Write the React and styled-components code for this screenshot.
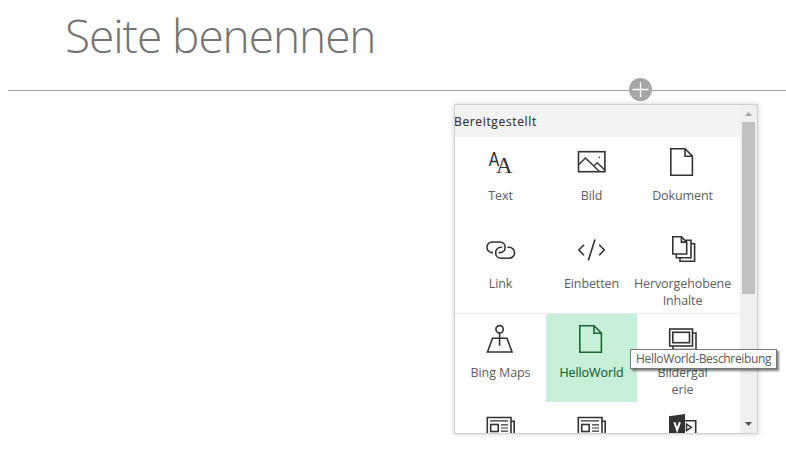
import React from "react";
import styled, { createGlobalStyle } from "styled-components";

const GlobalStyle = createGlobalStyle`
  * { box-sizing: border-box; }
  body { margin: 0; background: #fff; overflow: hidden; font-family: "Open Sans", "Noto Sans", sans-serif; }
`;

const Page = styled.main`
  position: relative;
  width: 786px;
  height: 464px;
  overflow: hidden;
`;

const PageTitle = styled.h1`
  margin: 0;
  height: 90px;
  padding: 4px 0 0 65px;
  font-size: 46px;
  line-height: 63px;
  font-weight: 300;
  letter-spacing: -1.05px;
  color: #737373;
  white-space: nowrap;
`;

const Divider = styled.div`
  height: 1px;
  margin-left: 8px;
  background: #a0a0a0;
`;

const AddButton = styled.button`
  position: absolute;
  left: 629px;
  top: 78px;
  width: 23px;
  height: 23px;
  padding: 0;
  border: 0;
  border-radius: 50%;
  background: #a6a6a6;
  svg { display: block; }
`;

const Toolbox = styled.section`
  position: absolute;
  left: 454px;
  top: 104px;
  width: 304px;
  height: 330px;
  display: flex;
  border: 1px solid #d0d0d0;
  background: #fff;
  box-shadow: 0 0 5px rgba(0, 0, 0, 0.2);
`;

const Content = styled.div`
  width: 285px;
  overflow: hidden;
`;

const GroupHeader = styled.h2`
  margin: 0;
  height: 32px;
  text-indent: -1px;
  background: #f3f3f3;
  color: #333;
  font-size: 12px;
  font-weight: 400;
  line-height: 33px;
  letter-spacing: 0.65px;
  -webkit-text-stroke: 0.15px #333;
`;

const Group = styled.div`
  display: grid;
  grid-template-columns: repeat(3, 91px);
  grid-auto-rows: 88px;
  border-top: ${(p) => (p.$separated ? "1px solid #eaeaea" : "0")};
`;

const Tile = styled.div`
  display: flex;
  flex-direction: column;
  align-items: center;
  padding-top: 9px;
  background: ${(p) => (p.$active ? "#c8f0d9" : "transparent")};
  color: ${(p) => (p.$active ? "#1a6535" : "#333")};
`;

const Label = styled.span`
  margin-top: 9px;
  font-size: 12.5px;
  line-height: 17px;
  letter-spacing: -0.1px;
  text-align: center;
  white-space: pre;
  color: ${(p) => (p.$active ? "#1a6535" : "#5e5e5e")};
  -webkit-text-stroke: ${(p) => (p.$active ? "0.15px #1a6535" : "0")};
`;

const Scrollbar = styled.div`
  width: 17px;
  display: flex;
  flex-direction: column;
  align-items: center;
  background: #f0f0f0;
`;

const Thumb = styled.div`
  width: 13px;
  height: 172px;
  margin-bottom: auto;
  background: #c1c1c1;
`;

const Arrow = styled.svg`
  display: block;
  width: 17px;
  height: 17px;
  fill: ${(p) => p.color};
`;

const Tooltip = styled.div`
  position: absolute;
  left: 630px;
  top: 349px;
  width: 147px;
  height: 20px;
  padding-left: 5px;
  border: 1px solid #767676;
  background: #fff;
  box-shadow: 2px 2px 2px rgba(0, 0, 0, 0.5);
  color: #575757;
  font-size: 12px;
  line-height: 18px;
  letter-spacing: -0.33px;
  white-space: nowrap;
`;

const IconBase = styled.svg`
  display: block;
  flex: none;
  width: 31px;
  height: 32px;
  fill: none;
  stroke: currentColor;
  stroke-width: 1.6;
`;

const NewsShapes = () => (
  <>
    <path d="M26 32V6.5H2.3V32M26 10.3H29.2V32" />
    <path d="M5 9.8H23M16 13.8H23M16 17H23M16 20.2H23" strokeWidth="1.2" />
    <rect x="5.7" y="13.5" width="7.5" height="7" />
  </>
);

const shapes = {
  text: (
    <g fill="currentColor" stroke="none">
      <text x="3.8" y="19.5" fontFamily="Liberation Sans" fontSize="20" textLength="10.5" lengthAdjust="spacingAndGlyphs">A</text>
      <text x="11" y="26.7" fontFamily="Liberation Serif" fontSize="23" textLength="16.5" lengthAdjust="spacingAndGlyphs">A</text>
    </g>
  ),
  image: (
    <>
      <rect x="2.5" y="5.7" width="26.4" height="20" />
      <path d="M2.5 18.8L9.5 12L23.5 25.5M17.7 19.9L21.2 16.8L29 24.2" strokeWidth="1.4" />
      <circle cx="23.4" cy="11.4" r="0.8" fill="currentColor" stroke="none" />
    </>
  ),
  document: <path d="M3.8 2.8H18L25.4 10.2V29.3H3.8ZM18 2.8V10.2H25.4" />,
  link: (
    <path d="M8 18.6H7.2A5.2 5.2 0 0 1 7.2 8H14.6C22 8 22 18.6 14.6 18.6H13.6M22.5 13.2H24A5.2 5.2 0 0 1 24 24.3H16.2C8.8 24.3 8.8 13.2 16.2 13.2H17" />
  ),
  embed: <path d="M8 10.7L2.9 16L8 21.3M19 5.5L12.3 26.4M23.2 10.7L28.3 16L23.2 21.3" />,
  documents: (
    <path d="M5.8 2.8H14.4L19.7 8.1V20H5.8ZM14.4 2.8V8.1H19.7M9.3 20V23.8H24V6.3H18M13 24V27.3H27.6V9.8H24" strokeWidth="1.6" />
  ),
  map: (
    <>
      <circle cx="14.6" cy="6.3" r="3.7" />
      <path d="M14.6 10V22.8M11.5 15.3H7.5L2.5 29H27L22 15.3H11.5" />
    </>
  ),
  gallery: (
    <>
      <rect x="2.7" y="6" width="22.8" height="17" />
      <rect x="5.8" y="9.3" width="16.7" height="10.4" />
      <path d="M25.5 10H29V26.5H6V23" />
    </>
  ),
  news: <NewsShapes />,
  video: (
    <>
      <path d="M2 5.3L18 3V32H2Z" fill="currentColor" stroke="none" />
      <path d="M18 9.7H28.7V24H18" />
      <path d="M19.5 13.2L24.3 16.4L19.5 19.6Z" strokeWidth="1.5" />
      <path d="M7.4 11.3L10.1 19.2L12.9 11.1" stroke="#fff" strokeWidth="2" />
    </>
  ),
};

const firstGroup = [
  { icon: "text", label: "Text" },
  { icon: "image", label: "Bild" },
  { icon: "document", label: "Dokument" },
  { icon: "link", label: "Link" },
  { icon: "embed", label: "Einbetten" },
  { icon: "documents", label: "Hervorgehobene\nInhalte" },
];

const secondGroup = [
  { icon: "map", label: "Bing Maps" },
  { icon: "document", label: "HelloWorld", active: true },
  { icon: "gallery", label: "Bildergal\nerie" },
  { icon: "news" },
  { icon: "news" },
  { icon: "video" },
];

const WebPartTile = ({ icon, label, active }) => (
  <Tile $active={active}>
    <IconBase viewBox="0 0 31 32">{shapes[icon]}</IconBase>
    {label && <Label $active={active}>{label}</Label>}
  </Tile>
);

export default function App() {
  return (
    <Page>
      <GlobalStyle />
      <PageTitle>Seite benennen</PageTitle>
      <Divider />
      <AddButton aria-label="Webpart">
        <svg width="23" height="23" viewBox="0 0 23 23">
          <path d="M3.5 11.5H19.5M11.5 4V19" stroke="#fff" strokeWidth="1.3" />
        </svg>
      </AddButton>
      <Toolbox>
        <Content>
          <GroupHeader>Bereitgestellt</GroupHeader>
          <Group>
            {firstGroup.map((part, i) => <WebPartTile key={i} {...part} />)}
          </Group>
          <Group $separated>
            {secondGroup.map((part, i) => <WebPartTile key={i} {...part} />)}
          </Group>
        </Content>
        <Scrollbar>
          <Arrow color="#a3a3a3" viewBox="0 0 17 17"><path d="M5 11L8.5 7L12 11Z" /></Arrow>
          <Thumb />
          <Arrow color="#505050" viewBox="0 0 17 17"><path d="M5 6L8.5 10L12 6Z" /></Arrow>
        </Scrollbar>
      </Toolbox>
      <Tooltip>HelloWorld-Beschreibung</Tooltip>
    </Page>
  );
}
